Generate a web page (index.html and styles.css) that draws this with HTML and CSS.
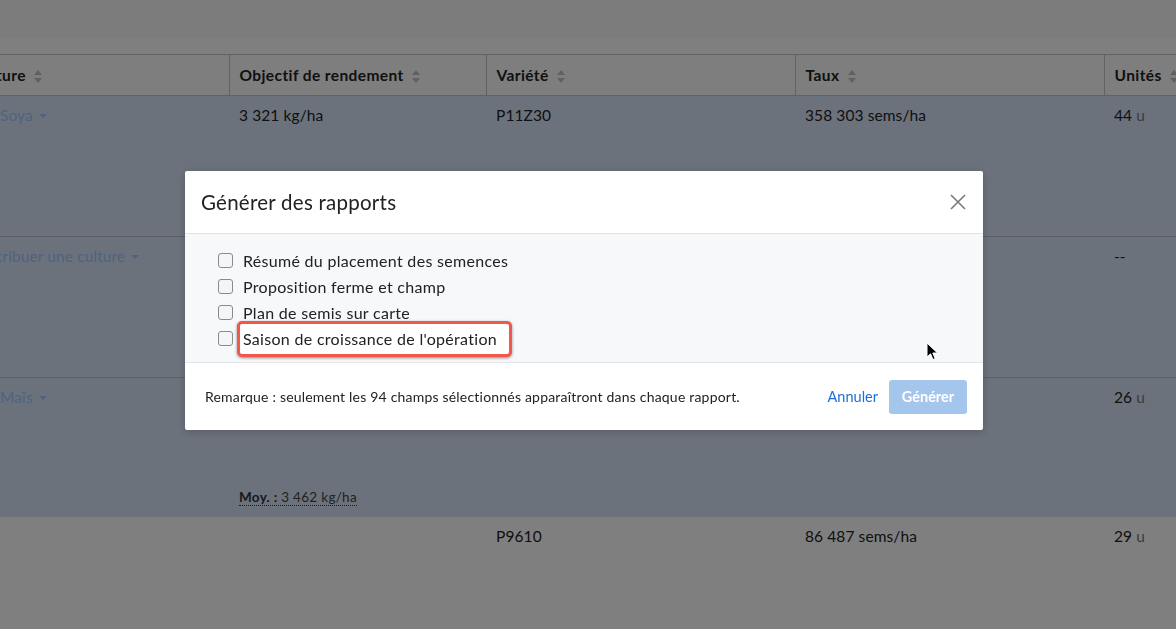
FILE: index.html
```html
<!DOCTYPE html>
<html lang="fr">
<head>
    <meta charset="UTF-8">
    <meta name="viewport" content="width=device-width, initial-scale=1.0">
    <title>Générer des rapports</title>
    <link rel="stylesheet" href="styles.css">
</head>
<body>
    <div class="page">
        <div class="toolbar"></div>
        <div class="subbar"></div>
        <table class="fields">
            <colgroup>
                <col class="col-crop">
                <col class="col-yield">
                <col class="col-variety">
                <col class="col-rate">
                <col class="col-units">
            </colgroup>
            <thead>
                <tr>
                    <th>Culture <span class="sort"></span></th>
                    <th>Objectif de rendement <span class="sort"></span></th>
                    <th>Variété <span class="sort"></span></th>
                    <th>Taux <span class="sort"></span></th>
                    <th>Unités <span class="sort"></span></th>
                </tr>
            </thead>
            <tbody>
                <tr class="selected">
                    <td><span class="swatch"></span><a class="crop-link">Soya <span class="caret"></span></a></td>
                    <td>3 321 kg/ha</td>
                    <td>P11Z30</td>
                    <td>358 303 sems/ha</td>
                    <td>44 <span class="unit">u</span></td>
                </tr>
                <tr class="selected">
                    <td><a class="crop-link assign">Attribuer une culture <span class="caret"></span></a></td>
                    <td></td>
                    <td></td>
                    <td></td>
                    <td>--</td>
                </tr>
                <tr class="selected last">
                    <td><span class="swatch"></span><a class="crop-link">Maïs <span class="caret"></span></a></td>
                    <td>
                        <div class="yield-cell">
                            <span class="avg"><b>Moy. :</b> 3 462 kg/ha</span>
                        </div>
                    </td>
                    <td></td>
                    <td></td>
                    <td>26 <span class="unit">u</span></td>
                </tr>
                <tr>
                    <td></td>
                    <td></td>
                    <td>P9610</td>
                    <td>86 487 sems/ha</td>
                    <td>29 <span class="unit">u</span></td>
                </tr>
            </tbody>
        </table>
    </div>

    <div class="backdrop"></div>

    <div class="modal">
        <div class="modal-header">
            <h2>Générer des rapports</h2>
            <button class="close" aria-label="Fermer">
                <svg width="16" height="16" viewBox="0 0 16 16"><path d="M1 1 L15 15 M15 1 L1 15" stroke="#7a7a7a" stroke-width="1.6" fill="none"/></svg>
            </button>
        </div>
        <div class="modal-body">
            <label class="option"><input type="checkbox"><span>Résumé du placement des semences</span></label>
            <label class="option"><input type="checkbox"><span>Proposition ferme et champ</span></label>
            <label class="option"><input type="checkbox"><span>Plan de semis sur carte</span></label>
            <label class="option"><input type="checkbox"><span class="callout">Saison de croissance de l'opération</span></label>
        </div>
        <div class="modal-footer">
            <p class="note">Remarque : seulement les 94 champs sélectionnés apparaîtront dans chaque rapport.</p>
            <a class="cancel">Annuler</a>
            <button class="generate" disabled>Générer</button>
        </div>
    </div>

    <svg class="cursor" width="13" height="19" viewBox="0 0 13 19">
        <path d="M1 1 L1 15 L4.5 11.8 L7 17.5 L9.2 16.6 L6.8 11 L11.5 11 Z" fill="#000" stroke="#fff" stroke-width="1"/>
    </svg>
</body>
</html>
```

FILE: styles.css
```css
body {
    margin: 0;
    font-family: Lato, "Open Sans", sans-serif;
    background-color: #ffffff;
    color: #222222;
    overflow: hidden;
}
.page {
    width: 1176px;
    height: 629px;
    overflow: hidden;
}
.toolbar {
    height: 38px;
    background-color: #f8f8f8;
}
.subbar {
    height: 16px;
    background-color: #ffffff;
}
.fields {
    border-collapse: collapse;
    table-layout: fixed;
    margin-left: -38px;
    width: 1274px;
}
.col-crop { width: 267px; }
.col-yield { width: 257px; }
.col-variety { width: 309px; }
.col-rate { width: 309px; }
.col-units { width: 132px; }
th {
    height: 40px;
    text-align: left;
    font-size: 15.5px;
    letter-spacing: 0.4px;
    font-weight: bold;
    color: #222222;
    padding: 0 10px;
    background-color: #fcfcfc;
    border-top: 1px solid #c4c4c4;
    border-bottom: 1px solid #c4c4c4;
    border-left: 1px solid #c4c4c4;
}
th:first-child {
    border-left: none;
}
.sort {
    display: inline-block;
    position: relative;
    width: 8px;
    height: 13px;
    vertical-align: -2px;
    margin-left: 4px;
}
.sort::before,
.sort::after {
    content: '';
    position: absolute;
    left: 0;
    border-left: 4px solid transparent;
    border-right: 4px solid transparent;
}
.sort::before {
    top: 0;
    border-bottom: 5px solid #c2c2c2;
}
.sort::after {
    bottom: 0;
    border-top: 5px solid #c2c2c2;
}
td {
    vertical-align: top;
    padding: 9px 10px 0;
    height: 131px;
    font-size: 15.5px;
    letter-spacing: 0.1px;
    line-height: 20px;
    color: #222222;
}
tr.selected td {
    background-color: #d8e4f8;
    border-bottom: 1px solid #babfca;
}
tr.selected.last td {
    border-bottom: none;
    height: 130px;
}
.unit {
    color: #777777;
}
.swatch {
    display: inline-block;
    width: 28px;
}
.crop-link {
    color: #9ec6ff;
}
.crop-link.assign {
    margin-left: 9px;
}
.caret {
    display: inline-block;
    border-left: 4px solid transparent;
    border-right: 4px solid transparent;
    border-top: 4px solid #9ec6ff;
    vertical-align: 3px;
    margin-left: 2px;
}
.yield-cell {
    display: flex;
    flex-direction: column;
    justify-content: flex-end;
    height: 119px;
}
.avg {
    align-self: flex-start;
    font-size: 13.5px;
    letter-spacing: 0.3px;
    line-height: 16px;
    color: #444444;
    border-bottom: 1px dotted #1a3a7a;
}
.avg b {
    color: #333333;
}
.backdrop {
    position: fixed;
    inset: 0;
    background-color: rgba(0, 0, 0, 0.5);
}
.modal {
    position: fixed;
    left: 185px;
    top: 171px;
    width: 798px;
    background-color: #ffffff;
    border-radius: 2px;
    box-shadow: 0 2px 8px rgba(0, 0, 0, 0.2);
}
.modal-header {
    height: 62px;
    display: flex;
    align-items: center;
    justify-content: space-between;
    padding: 0 17px 0 16px;
    border-bottom: 1px solid #dfe2e6;
}
.modal-header h2 {
    margin: 0;
    font-size: 20.5px;
    letter-spacing: 0.25px;
    font-weight: normal;
    color: #222222;
}
.close {
    border: none;
    background: none;
    padding: 0;
    width: 16px;
    height: 16px;
    cursor: pointer;
}
.close svg {
    display: block;
}
.modal-body {
    background-color: #f7f8fa;
    padding: 13px 33px 11px;
    border-bottom: 1px solid #e1e4e8;
}
.option {
    display: flex;
    align-items: center;
    height: 26px;
    font-size: 16px;
    letter-spacing: 0.3px;
    color: #222222;
}
.option input {
    appearance: none;
    width: 15px;
    height: 15px;
    margin: 0 10px 0 0;
    border: 1px solid #8b8b8b;
    border-radius: 3px;
    background-color: #f4f5f7;
}
.callout {
    position: relative;
    z-index: 0;
}
.callout::before {
    content: '';
    position: absolute;
    top: -8px;
    bottom: -9px;
    left: -6px;
    right: -15px;
    border: 3px solid #f2574c;
    border-radius: 5px;
    background-color: #ffffff;
    box-shadow: 0 1px 3px rgba(0, 0, 0, 0.45);
    z-index: -1;
}
.modal-footer {
    height: 67px;
    display: flex;
    align-items: center;
    padding: 0 16px 0 20px;
}
.note {
    flex: 1;
    margin: 0;
    font-size: 14px;
    letter-spacing: 0.2px;
    color: #222222;
}
.cancel {
    font-size: 14.5px;
    color: #1c6fd8;
    margin-right: 11px;
    cursor: pointer;
}
.generate {
    width: 78px;
    height: 34px;
    border: none;
    border-radius: 3px;
    background-color: #a4c5ec;
    color: #ffffff;
    font-family: Lato, sans-serif;
    font-size: 14.5px;
    font-weight: bold;
}
.cursor {
    position: fixed;
    left: 926px;
    top: 342px;
}
```
